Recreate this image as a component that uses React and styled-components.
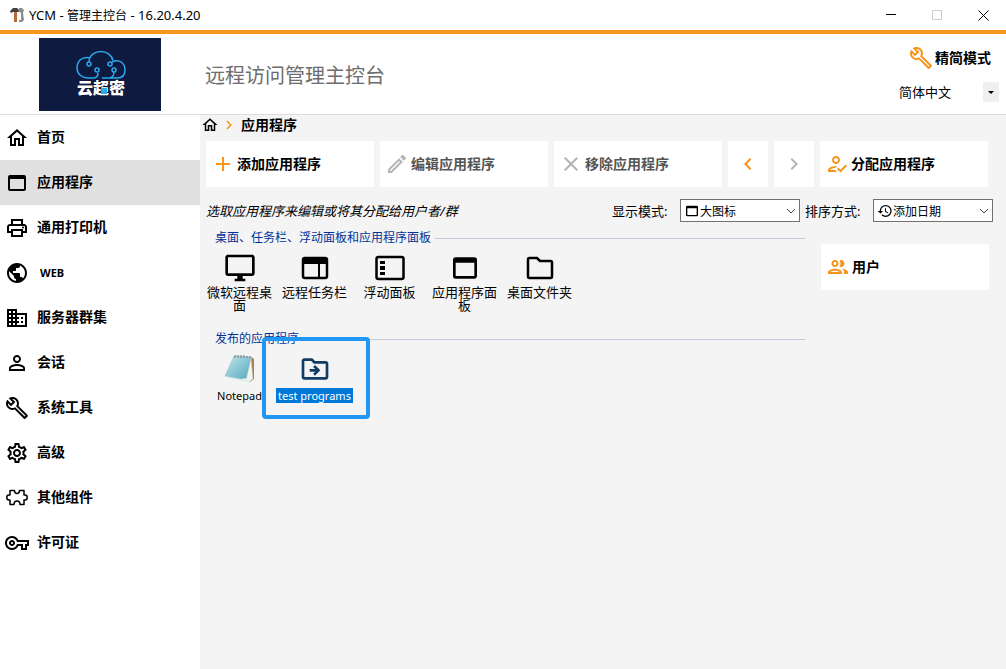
import React from 'react'
import styled, { createGlobalStyle } from 'styled-components'
import {
    MdOutlineHome,
    MdWebAsset,
    MdOutlinePrint,
    MdPublic,
    MdBusiness,
    MdPersonOutline,
    MdOutlineBuild,
    MdOutlineSettings,
    MdOutlineVpnKey,
    MdAdd,
    MdClose,
    MdOutlineEdit,
    MdChevronLeft,
    MdChevronRight,
    MdOutlineHowToReg,
    MdOutlineGroup,
    MdHistory,
    MdOutlineDesktopWindows,
    MdOutlineDriveFileMove
} from 'react-icons/md'

const PuzzleIcon = () => (
    <svg width="22" height="17" viewBox="0 0 22 17" fill="none" stroke="currentColor" strokeWidth="1.5" strokeLinejoin="round" aria-hidden="true">
        <path d="M4 1.5h4.500c0 2 .7 3 2.500 3s2.500-1 2.500-3H18v4.500h1.200c1.200 0 2 1 2 2.500s-.8 2.500-2 2.500H18v4.500h-4c0-2-1-3.500-3-3.500s-3 1.500-3 3.500H4V11H2.800C1.600 11 .8 10 .8 8.500S1.600 6 2.800 6H4z" />
    </svg>
)

const TaskbarIcon = () => (
    <svg width="28" height="24" viewBox="0 0 28 24" aria-hidden="true">
        <rect x="2" y="2" width="24" height="20" rx="2" fill="none" stroke="#000" strokeWidth="2.500" />
        <path d="M2 2h24v6H2zM17 8h2v14h-2z" />
    </svg>
)

const PanelIcon = () => (
    <svg width="30" height="26" viewBox="0 0 30 26" aria-hidden="true">
        <rect x="1.500" y="2" width="27" height="22" rx="2" fill="none" stroke="#000" strokeWidth="2.500" />
        <path d="M5 6h5v3H5zM5 11h5v4H5zM5 17h5v3H5z" />
    </svg>
)

const FolderIcon = () => (
    <svg width="28" height="24" viewBox="0 0 28 24" fill="none" stroke="#000" strokeWidth="2.500" aria-hidden="true">
        <path d="M3.500 2H11l3 3h10.500a1.500 1.500 0 0 1 1.500 1.500v14a1.500 1.500 0 0 1-1.500 1.500h-21A1.500 1.500 0 0 1 2 20.500v-17A1.500 1.500 0 0 1 3.500 2z" />
    </svg>
)

const NotepadIcon = () => (
    <svg width="32" height="32" viewBox="0 0 32 32" aria-hidden="true">
        <defs>
            <linearGradient id="page" x1="0" y1="0" x2="1" y2="1">
                <stop offset="0" stopColor="#c5e9ef" />
                <stop offset="1" stopColor="#4fa5b8" />
            </linearGradient>
        </defs>
        <path d="M27 4l3 2v20l-4 3z" fill="#a5824e" />
        <path d="M27 4l2 22-4 3-3-3z" fill="#f3f3ed" stroke="#bbb" strokeWidth=".5" />
        <path d="M10 3l17 1-5 22-5 1-16-4z" fill="url(#page)" stroke="#8fb8c0" strokeWidth=".5" />
        <path d="M1 23l16 3 5-1 3 4-6-1z" fill="#dfeff0" />
        <path d="M11 2v3M14 2v3M17 2v3M20 2v3M23 3v2M26 3v2" stroke="#777" />
    </svg>
)

const ToolsIcon = () => (
    <svg width="16" height="16" viewBox="0 0 16 16" aria-hidden="true">
        <path d="M1 4l3-3h4l2 2v2H4L2 6z" fill="#444" />
        <path d="M5 5h3v10H5z" fill="#b9683a" />
        <path d="M10 1h3l2 2-1 3 1 7-2 2h-3v-2h2V6L9 4z" fill="#8e8e8e" />
    </svg>
)

const CloudLogo = () => (
    <svg width="50" height="30" viewBox="0 0 50 30" fill="none" stroke="#2ba9e8" strokeWidth="1.500" aria-hidden="true">
        <path d="M14 8C5 6 1 12 1 18c0 6 5 10 11 10h5c3 0 5-2 5-5M13 12C13 5 19 1.500 25 1.500c6 0 11 4 12 9" />
        <path d="M36 12c8-4 13 2 13 8s-4 8-8 8H26M38 22c0 3-1 5-4 6" />
        <circle cx="13" cy="14" r="2" />
        <circle cx="34" cy="14" r="2" />
        <circle cx="21" cy="20" r="2" />
        <circle cx="38" cy="20" r="2" />
    </svg>
)

const Arrow = () => (
    <svg width="10" height="6" viewBox="0 0 10 6" fill="none" stroke="#444" aria-hidden="true">
        <path d="M1 1l4 4 4-4" />
    </svg>
)

const menu = [
    { label: '首页', icon: <MdOutlineHome /> },
    { label: '应用程序', icon: <MdWebAsset />, active: true },
    { label: '通用打印机', icon: <MdOutlinePrint /> },
    { label: 'WEB', icon: <MdPublic />, latin: true },
    { label: '服务器群集', icon: <MdBusiness /> },
    { label: '会话', icon: <MdPersonOutline /> },
    { label: '系统工具', icon: <MdOutlineBuild /> },
    { label: '高级', icon: <MdOutlineSettings /> },
    { label: '其他组件', icon: <PuzzleIcon /> },
    { label: '许可证', icon: <MdOutlineVpnKey /> }
]

const desktopItems = [
    { label: '微软远程桌面', icon: <MdOutlineDesktopWindows /> },
    { label: '远程任务栏', icon: <TaskbarIcon /> },
    { label: '浮动面板', icon: <PanelIcon /> },
    { label: '应用程序面板', icon: <MdWebAsset /> },
    { label: '桌面文件夹', icon: <FolderIcon /> }
]

const App = () => {
    return (
        <Window>
            <GlobalStyle />
            <TitleBar>
                <ToolsIcon />
                <WindowTitle>YCM - <span>管理主控台</span> - 16.20.4.20</WindowTitle>
                <WindowButton aria-label="最小化">
                    <svg width="10" height="10" viewBox="0 0 10 10"><path d="M0 4.500h10" stroke="#000" /></svg>
                </WindowButton>
                <WindowButton aria-label="最大化" disabled>
                    <svg width="10" height="10" viewBox="0 0 10 10"><path d="M.5.5h9v9h-9z" fill="none" stroke="#ccc" /></svg>
                </WindowButton>
                <WindowButton aria-label="关闭">
                    <svg width="11" height="11" viewBox="0 0 11 11"><path d="M.5.5l10 10M10.500.5l-10 10" stroke="#000" /></svg>
                </WindowButton>
            </TitleBar>
            <Header>
                <Logo>
                    <CloudLogo />
                    <span>云超密</span>
                </Logo>
                <h1>远程访问管理主控台</h1>
                <HeaderTools>
                    <ModeButton><MdOutlineBuild /><Label>精简模式</Label></ModeButton>
                    <Language>
                        <select aria-label="语言">
                            <option>简体中文</option>
                        </select>
                        <DropMark>
                            <svg width="6" height="3" viewBox="0 0 6 3"><path d="M0 0h6L3 3z" /></svg>
                        </DropMark>
                    </Language>
                </HeaderTools>
            </Header>
            <Body>
                <Sidebar>
                    {menu.map(({ label, icon, active, latin }) => (
                        <MenuLink href="#" key={label} $active={active} $latin={latin}>
                            <MenuIcon>{icon}</MenuIcon>
                            {latin ? label : <Label>{label}</Label>}
                        </MenuLink>
                    ))}
                </Sidebar>
                <Content>
                    <Breadcrumb>
                        <a href="#" aria-label="首页"><MdOutlineHome /></a>
                        <MdChevronRight color="#f7941d" />
                        <Label>应用程序</Label>
                    </Breadcrumb>
                    <Toolbar>
                        <ToolButton><MdAdd /><Label>添加应用程序</Label></ToolButton>
                        <ToolButton disabled><MdOutlineEdit /><Label>编辑应用程序</Label></ToolButton>
                        <ToolButton disabled><MdClose /><Label>移除应用程序</Label></ToolButton>
                        <ToolButton $center aria-label="上一个"><MdChevronLeft /></ToolButton>
                        <ToolButton $center disabled aria-label="下一个"><MdChevronRight /></ToolButton>
                        <ToolButton><MdOutlineHowToReg /><Label>分配应用程序</Label></ToolButton>
                    </Toolbar>
                    <Filters>
                        <em>选取应用程序来编辑或将其分配给用户者/群</em>
                        <label htmlFor="view">显示模式:</label>
                        <SelectBox>
                            <MdWebAsset />
                            <select id="view"><option>大图标</option></select>
                            <Arrow />
                        </SelectBox>
                        <label htmlFor="sort">排序方式:</label>
                        <SelectBox>
                            <MdHistory />
                            <select id="sort"><option>添加日期</option></select>
                            <Arrow />
                        </SelectBox>
                    </Filters>
                    <Columns>
                        <Groups>
                            <Group>
                                <h2>桌面、任务栏、浮动面板和应用程序面板</h2>
                                <Items>
                                    {desktopItems.map(({ label, icon }) => (
                                        <Item key={label}>
                                            <ItemIcon>{icon}</ItemIcon>
                                            <span>{label}</span>
                                        </Item>
                                    ))}
                                </Items>
                            </Group>
                            <Group>
                                <h2>发布的应用程序</h2>
                                <Items>
                                    <Item $latin>
                                        <ItemIcon><NotepadIcon /></ItemIcon>
                                        <span>Notepad</span>
                                    </Item>
                                    <Item $latin $selected>
                                        <ItemIcon><MdOutlineDriveFileMove /></ItemIcon>
                                        <span>test programs</span>
                                        <Marker />
                                    </Item>
                                </Items>
                            </Group>
                        </Groups>
                        <Side>
                            <ToolButton><MdOutlineGroup /><Label>用户</Label></ToolButton>
                        </Side>
                    </Columns>
                </Content>
            </Body>
        </Window>
    )
}

const GlobalStyle = createGlobalStyle`
* {
    box-sizing: border-box;
}
body {
    margin: 0;
    color: #000;
    background: #f4f4f4;
    font: 13px "Noto Sans", "Noto Sans CJK SC", sans-serif;
}
button, select {
    font: inherit;
    color: inherit;
    border: 0;
    padding: 0;
    background: none;
}
select {
    appearance: none;
}
a {
    color: inherit;
    text-decoration: none;
}
svg {
    flex: none;
}
`

const Window = styled.div`
min-height: 100vh;
display: flex;
flex-direction: column;
`

const TitleBar = styled.div`
height: 34px;
display: flex;
align-items: center;
padding-left: 9px;
background: white;
border-bottom: 4px solid #f7941d;
`

const WindowTitle = styled.span`
flex: 1;
margin-left: 4px;
line-height: 16px;
span{
    font-size: 12px;
}
`

const WindowButton = styled.button`
width: 46px;
height: 30px;
display: flex;
align-items: center;
justify-content: center;
`

const Header = styled.header`
height: 81px;
display: flex;
align-items: center;
padding: 0 7px 0 39px;
background: white;
border-bottom: 1px solid #dcdcdc;
h1{
    flex: 1;
    margin: 0 0 0 44px;
    font-size: 20px;
    font-weight: 400;
    color: #6d6d6d;
}
`

const Logo = styled.div`
width: 122px;
height: 73px;
display: flex;
flex-direction: column;
align-items: center;
padding: 12px 0 0 2px;
background: #0e1a40;
span{
    position: relative;
    color: white;
    font-size: 16px;
    font-weight: 900;
    line-height: 16px;
}
span::after{
    content: '';
    position: absolute;
    left: 24px;
    top: 8px;
    width: 6px;
    height: 6px;
    background: #2ba9e8;
}
`

const HeaderTools = styled.div`
width: 100px;
display: flex;
flex-direction: column;
gap: 12px;
`

/* bold chinese caption, lifted to sit level with its icon */
const Label = styled.span`
padding-bottom: 3px;
font-size: 14px;
font-weight: 700;
`

const ModeButton = styled.button`
height: 24px;
display: flex;
align-items: center;
justify-content: flex-end;
gap: 2px;
margin-right: 8px;
white-space: nowrap;
svg{
    width: 24px;
    height: 24px;
    color: #f7941d;
}
`

const Language = styled.div`
display: flex;
height: 20px;
select{
    flex: 1;
}
`

const DropMark = styled.span`
width: 16px;
display: flex;
align-items: center;
justify-content: center;
background: #efefef;
`

const Body = styled.div`
flex: 1;
display: flex;
`

const Sidebar = styled.nav`
width: 200px;
background: white;
`

const MenuLink = styled.a`
height: 45px;
display: flex;
align-items: center;
gap: ${({ $latin }) => ($latin ? '9px' : '6px')};
padding-left: 3px;
font-size: 11px;
font-weight: 700;
background: ${({ $active }) => ($active ? '#e0e0e0' : 'white')};
`

const MenuIcon = styled.span`
width: 28px;
display: flex;
justify-content: center;
font-size: 24px;
`

const Content = styled.main`
flex: 1;
min-width: 0;
`

const Breadcrumb = styled.div`
height: 20px;
display: flex;
align-items: center;
gap: 1px;
padding-left: 1px;
font-size: 18px;
a{
    display: flex;
}
${Label}{
    margin-left: 2px;
}
`

const Toolbar = styled.div`
display: grid;
grid-template-columns: 1fr 1fr 1fr 40px 40px 1fr;
gap: 6px;
padding: 6px 18px 0 6px;
`

const ToolButton = styled.button`
width: 100%;
height: 46px;
display: flex;
align-items: center;
justify-content: ${({ $center }) => ($center ? 'center' : 'flex-start')};
gap: 2px;
padding-left: ${({ $center }) => ($center ? '0' : '5px')};
background: white;
white-space: nowrap;
svg{
    width: 24px;
    height: 24px;
    color: #f7941d;
}
&:disabled{
    color: #555;
}
&:disabled svg{
    color: #b4b4b4;
}
`

const Filters = styled.div`
display: flex;
align-items: center;
padding: 12px 13px 0 6px;
em{
    flex: 1;
}
label{
    width: 73px;
    padding-left: 5px;
}
`

const SelectBox = styled.div`
width: 120px;
height: 23px;
display: flex;
align-items: center;
padding: 0 3px;
background: white;
border: 1px solid #707070;
font-size: 12px;
select{
    flex: 1;
    padding-top: 1px;
}
> svg:first-child{
    width: 16px;
    height: 16px;
}
`

const Columns = styled.div`
display: flex;
gap: 16px;
padding: 6px 17px 0 2px;
`

const Groups = styled.div`
flex: 1;
`

const Group = styled.section`
min-height: 101px;
h2{
    display: flex;
    align-items: center;
    gap: 4px;
    margin: 0;
    padding-left: 13px;
    font-size: 12px;
    font-weight: 400;
    line-height: 20px;
    color: #003399;
}
h2::after{
    content: '';
    flex: 1;
    border-top: 1px solid #c3cbdb;
}
`

const Items = styled.div`
display: flex;
padding-top: 3px;
`

const Item = styled.button`
position: relative;
width: 75px;
display: flex;
flex-direction: column;
align-items: center;
justify-content: flex-start;
gap: ${({ $latin }) => ($latin ? '2px' : '0')};
padding: 0 2px;
font-size: ${({ $latin }) => ($latin ? '11px' : '13px')};
line-height: 13px;
color: ${({ $selected }) => ($selected ? '#123c63' : '#000')};
span + span{
    padding: 1px 2px;
    white-space: ${({ $latin }) => ($latin ? 'nowrap' : 'normal')};
    color: ${({ $selected }) => ($selected ? 'white' : '#000')};
    background: ${({ $selected }) => ($selected ? '#0078d7' : 'none')};
}
`

const ItemIcon = styled.span`
height: 34px;
display: flex;
align-items: center;
font-size: 32px;
`

/* frame drawn over the selected program */
const Marker = styled.i`
position: absolute;
inset: -15px -18px -16px -15px;
border: 4px solid #2196f3;
border-radius: 4px;
`

const Side = styled.aside`
width: 168px;
padding-top: 16px;
`

export default App
